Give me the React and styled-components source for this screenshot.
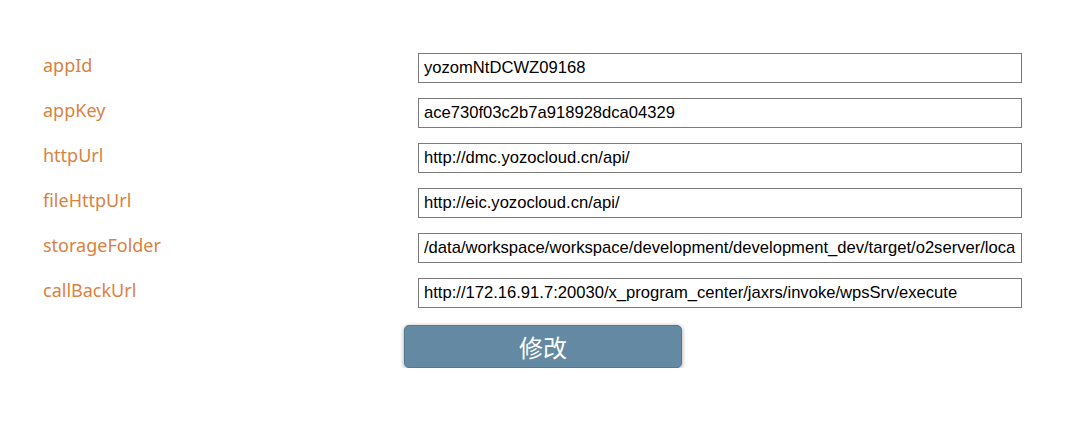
import React from 'react';
import styled, { createGlobalStyle } from 'styled-components';

const GlobalStyle = createGlobalStyle`
  html, body {
    margin: 0;
    padding: 0;
    background: #fff;
  }
  body {
    font-family: "Noto Sans", "Noto Sans CJK SC", sans-serif;
  }
`;

const Page = styled.div`
  padding: 53px 0 0 43px;
`;

const Form = styled.form`
  display: grid;
  grid-template-columns: 375px 604px;
  row-gap: 15px;
  align-items: start;
`;

const Label = styled.label`
  font-size: 18px;
  line-height: 24px;
  color: #d9823f;
`;

const Field = styled.input`
  box-sizing: border-box;
  width: 604px;
  height: 30px;
  margin: 0;
  padding: 0 5px;
  border: 1px solid #7a7a7a;
  border-radius: 0;
  font-family: "Liberation Sans", Arial, sans-serif;
  font-size: 16.6px;
  color: #000;
  background: #fff;
  outline: none;
`;

const Actions = styled.div`
  grid-column: 2;
  margin-top: 2px;
  margin-left: -14px;
`;

const SubmitButton = styled.button`
  width: 278px;
  height: 43px;
  border: 1px solid #56798f;
  border-radius: 5px;
  background: #638aa2;
  box-shadow: 0 1px 4px rgba(0, 0, 0, 0.4);
  color: #fff;
  font-family: "Noto Sans CJK SC", sans-serif;
  font-size: 24px;
  line-height: 1;
  cursor: pointer;
`;

const fields = [
  { name: 'appId', value: 'yozomNtDCWZ09168' },
  { name: 'appKey', value: 'ace730f03c2b7a918928dca04329' },
  { name: 'httpUrl', value: 'http://dmc.yozocloud.cn/api/' },
  { name: 'fileHttpUrl', value: 'http://eic.yozocloud.cn/api/' },
  { name: 'storageFolder', value: '/data/workspace/workspace/development/development_dev/target/o2server/local/repository/storage' },
  { name: 'callBackUrl', value: 'http://172.16.91.7:20030/x_program_center/jaxrs/invoke/wpsSrv/execute' },
];

export default function App() {
  return (
    <Page>
      <GlobalStyle />
      <Form onSubmit={(e) => e.preventDefault()}>
        {fields.map((f) => (
          <React.Fragment key={f.name}>
            <Label htmlFor={f.name}>{f.name}</Label>
            <Field id={f.name} type="text" defaultValue={f.value} />
          </React.Fragment>
        ))}
        <Actions>
          <SubmitButton type="submit">修改</SubmitButton>
        </Actions>
      </Form>
    </Page>
  );
}
